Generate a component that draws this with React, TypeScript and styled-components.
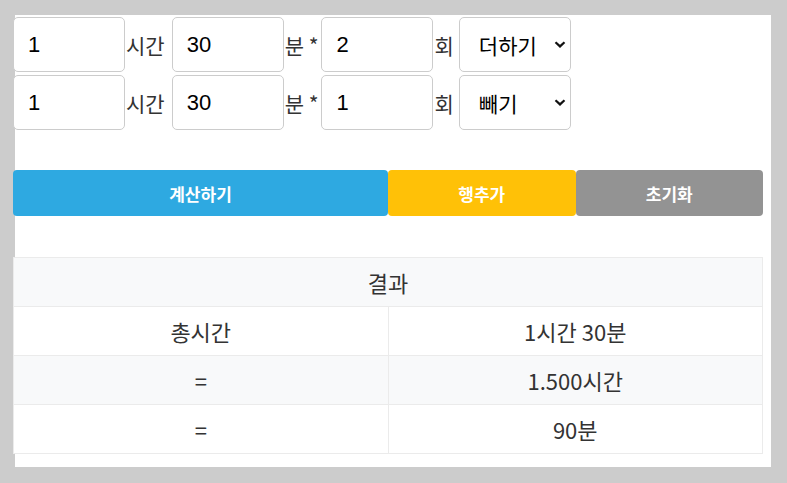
import React, { useState } from "react";
import styled, { createGlobalStyle } from "styled-components";

const GlobalStyle = createGlobalStyle`
  html, body {
    margin: 0;
    background: #cccccc;
  }
  #root {
    padding: 15px 16px 16px 15px;
  }
`;

const StPanel = styled.div`
  width: 756px;
  height: 452px;
  background: #ffffff;
  padding-top: 2px;
  box-sizing: border-box;
`;

const StContent = styled.div`
  width: 750px;
  margin-left: -2px;
`;

const StRow = styled.div`
  display: flex;
  align-items: center;
  height: 55px;
  margin-bottom: 3px;
`;

const StInput = styled.input`
  width: 112px;
  height: 55px;
  box-sizing: border-box;
  border: 1px solid #cccccc;
  border-radius: 5px;
  padding: 0 14px;
  font-family: "Liberation Sans", Arial, sans-serif;
  font-size: 22px;
  color: #000;
  background: #fff;
  outline: none;
`;

const StUnit = styled.span<{ $after: number }>`
  font-family: "Noto Sans CJK KR", "Noto Sans", sans-serif;
  font-size: 21px;
  color: #333;
  padding-left: 1px;
  padding-right: ${(p) => p.$after}px;
  white-space: pre;
`;

const StSelectWrap = styled.div`
  position: relative;
  width: 112px;
  height: 55px;

  svg {
    position: absolute;
    right: 5px;
    top: 24px;
    pointer-events: none;
  }
`;

const StSelect = styled.select`
  appearance: none;
  width: 100%;
  height: 100%;
  box-sizing: border-box;
  border: 1px solid #cccccc;
  border-radius: 5px;
  padding: 0 20px 0 19px;
  font-family: "Noto Sans CJK KR", sans-serif;
  font-size: 21px;
  color: #000;
  background: #fff;
  outline: none;
`;

const StButtonBar = styled.div`
  display: grid;
  grid-template-columns: 2fr 1fr 1fr;
  margin-top: 40px;
`;

const StButton = styled.button<{ $bg: string }>`
  height: 46px;
  border: none;
  border-radius: 4px;
  background: ${(p) => p.$bg};
  color: #fff;
  font-family: "Noto Sans CJK KR", sans-serif;
  font-weight: 700;
  font-size: 17px;
  cursor: pointer;
`;

const StTable = styled.table`
  width: 750px;
  margin-top: 41px;
  border-collapse: collapse;
  table-layout: fixed;
  font-family: "Noto Sans CJK KR", sans-serif;
  font-size: 22px;
  color: #333;

  th,
  td {
    height: 48px;
    padding: 0;
    border: 1px solid #ebebeb;
    text-align: center;
    font-weight: 400;
  }
`;

const StTr = styled.tr<{ $shade?: boolean }>`
  background: ${(p) => (p.$shade ? "#f8f9fa" : "#ffffff")};
`;

const Chevron = () => (
  <svg width="12" height="7" viewBox="0 0 12 7">
    <path d="M1.5 1.2 L6 5.4 L10.5 1.2" fill="none" stroke="#111" strokeWidth="2.2" />
  </svg>
);

type Line = { hour: string; min: string; times: string; op: string };

export default function App() {
  const [lines, setLines] = useState<Line[]>([
    { hour: "1", min: "30", times: "2", op: "add" },
    { hour: "1", min: "30", times: "1", op: "sub" },
  ]);

  const update = (i: number, key: keyof Line, value: string) =>
    setLines(lines.map((l, j) => (j === i ? { ...l, [key]: value } : l)));

  return (
    <>
      <GlobalStyle />
      <StPanel>
        <StContent>
          {lines.map((l, i) => (
            <StRow key={i}>
              <StInput value={l.hour} onChange={(e) => update(i, "hour", e.target.value)} />
              <StUnit $after={7}>시간</StUnit>
              <StInput value={l.min} onChange={(e) => update(i, "min", e.target.value)} />
              <StUnit $after={3}>분 *</StUnit>
              <StInput value={l.times} onChange={(e) => update(i, "times", e.target.value)} />
              <StUnit $after={5}>회</StUnit>
              <StSelectWrap>
                <StSelect value={l.op} onChange={(e) => update(i, "op", e.target.value)}>
                  <option value="add">더하기</option>
                  <option value="sub">빼기</option>
                </StSelect>
                <Chevron />
              </StSelectWrap>
            </StRow>
          ))}
          <StButtonBar>
            <StButton $bg="#2ea9e1">계산하기</StButton>
            <StButton $bg="#ffc107">행추가</StButton>
            <StButton $bg="#939393">초기화</StButton>
          </StButtonBar>
          <StTable>
            <thead>
              <StTr $shade>
                <th colSpan={2}>결과</th>
              </StTr>
            </thead>
            <tbody>
              <StTr>
                <td>총시간</td>
                <td>1시간 30분</td>
              </StTr>
              <StTr $shade>
                <td>=</td>
                <td>1.500시간</td>
              </StTr>
              <StTr>
                <td>=</td>
                <td>90분</td>
              </StTr>
            </tbody>
          </StTable>
        </StContent>
      </StPanel>
    </>
  );
}
